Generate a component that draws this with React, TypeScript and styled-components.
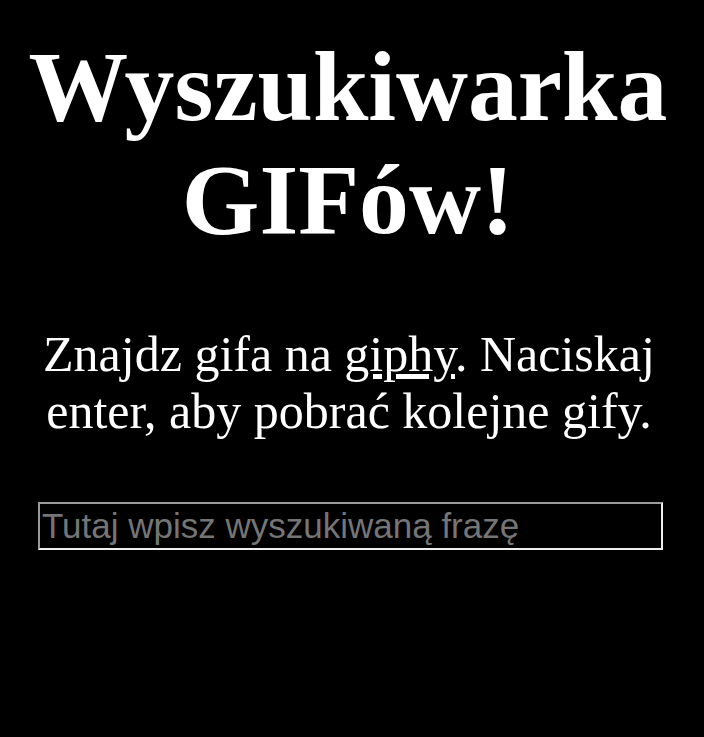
import React from "react";
import styled, { createGlobalStyle } from "styled-components";

const GlobalStyle = createGlobalStyle`
  html, body {
    margin: 0;
    padding: 0;
    background: #000000;
    color: #ffffff;
    font-family: "Liberation Serif", "Times New Roman", serif;
  }
`;

const Page = styled.main`
  display: flex;
  flex-direction: column;
  align-items: stretch;
  padding-top: 30px;
  min-height: 737px;
  box-sizing: border-box;
`;

const Title = styled.h1`
  margin: 0 0 70px;
  padding-right: 8px;
  font-family: "Liberation Serif", "Times New Roman", serif;
  font-weight: bold;
  font-size: 99.7px;
  line-height: 113px;
  text-align: center;
  color: #ffffff;
`;

const Lead = styled.p`
  margin: 0 0 62px;
  padding-right: 6px;
  font-size: 50px;
  line-height: 57px;
  text-align: center;
  color: #ffffff;
`;

const Link = styled.a`
  color: inherit;
  text-decoration: underline;
`;

const SearchForm = styled.form`
  display: flex;
  padding-left: 38px;
  margin: 0;
`;

const SearchInput = styled.input`
  width: 625px;
  height: 48px;
  box-sizing: border-box;
  padding: 1px 2px;
  margin: 0;
  background: transparent;
  color: #ffffff;
  font-family: "Liberation Sans", Arial, sans-serif;
  font-size: 35px;
  border-style: solid;
  border-width: 2px;
  border-color: #9a9a9a #eeeeee #eeeeee #9a9a9a;
  outline: none;

  &::placeholder {
    color: #757575;
    opacity: 1;
  }
`;

export default function App() {
  return (
    <>
      <GlobalStyle />
      <Page>
        <Title>
          Wyszukiwarka
          <br />
          GIFów!
        </Title>
        <Lead>
          Znajdz gifa na <Link href="#">giphy</Link>. Naciskaj enter, aby pobrać
          kolejne gify.
        </Lead>
        <SearchForm onSubmit={(e) => e.preventDefault()}>
          <SearchInput type="text" placeholder="Tutaj wpisz wyszukiwaną frazę" />
        </SearchForm>
      </Page>
    </>
  );
}
